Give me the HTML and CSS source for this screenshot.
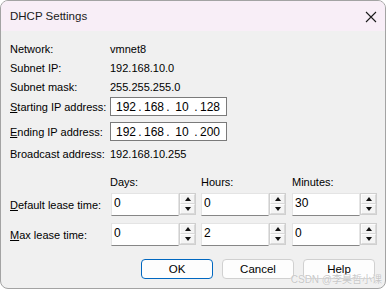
FILE: index.html
```html
<!DOCTYPE html>
<html lang="en">
<head>
    <meta charset="UTF-8">
    <title>DHCP Settings</title>
    <link rel="stylesheet" href="styles.css">
</head>
<body>
    <div class="window">
        <div class="titlebar">
            <span class="title">DHCP Settings</span>
            <svg class="close" width="12" height="12" viewBox="0 0 12 12">
                <path d="M1 1 L11 11 M11 1 L1 11" stroke="#1b1b1b" stroke-width="1.1" fill="none"/>
            </svg>
        </div>

        <div class="content">
            <div class="row">
                <span class="label">Network:</span>
                <span class="value">vmnet8</span>
            </div>
            <div class="row">
                <span class="label">Subnet IP:</span>
                <span class="value">192.168.10.0</span>
            </div>
            <div class="row">
                <span class="label">Subnet mask:</span>
                <span class="value">255.255.255.0</span>
            </div>
            <div class="row ip-row first">
                <span class="label"><u>S</u>tarting IP address:</span>
                <div class="ipbox">
                    <span class="seg">192</span><span class="dot">.</span>
                    <span class="seg">168</span><span class="dot">.</span>
                    <span class="seg">10</span><span class="dot">.</span>
                    <span class="seg">128</span>
                </div>
            </div>
            <div class="row ip-row">
                <span class="label"><u>E</u>nding IP address:</span>
                <div class="ipbox">
                    <span class="seg">192</span><span class="dot">.</span>
                    <span class="seg">168</span><span class="dot">.</span>
                    <span class="seg">10</span><span class="dot">.</span>
                    <span class="seg">200</span>
                </div>
            </div>
            <div class="row broadcast">
                <span class="label">Broadcast address:</span>
                <span class="value">192.168.10.255</span>
            </div>

            <div class="lease-head">
                <span class="label"></span>
                <span class="head">Days:</span>
                <span class="head">Hours:</span>
                <span class="head">Minutes:</span>
            </div>
            <div class="lease-row">
                <span class="label"><u>D</u>efault lease time:</span>
                <div class="spin"><input class="num" value="0"><div class="arrows"><span class="up"></span><span class="down"></span></div></div>
                <div class="spin"><input class="num" value="0"><div class="arrows"><span class="up"></span><span class="down"></span></div></div>
                <div class="spin"><input class="num" value="30"><div class="arrows"><span class="up"></span><span class="down"></span></div></div>
            </div>
            <div class="lease-row second">
                <span class="label"><u>M</u>ax lease time:</span>
                <div class="spin"><input class="num" value="0"><div class="arrows"><span class="up"></span><span class="down"></span></div></div>
                <div class="spin"><input class="num" value="2"><div class="arrows"><span class="up"></span><span class="down"></span></div></div>
                <div class="spin"><input class="num" value="0"><div class="arrows"><span class="up"></span><span class="down"></span></div></div>
            </div>

            <div class="buttons">
                <button class="default">OK</button>
                <button>Cancel</button>
                <button>Help</button>
            </div>
        </div>

        <div class="watermark">CSDN @李昊哲小课</div>
    </div>
</body>
</html>
```

FILE: styles.css
```css
body {
    margin: 0;
    background-color: white;
    font-family: "Liberation Sans", Arial, sans-serif;
    font-size: 11px;
    color: #000;
}

.window {
    position: relative;
    width: 386px;
    height: 289px;
    box-sizing: border-box;
    border: 1px solid #a3a3a3;
    border-radius: 8px;
    background-color: #f0f0f0;
    overflow: hidden;
}

.titlebar {
    height: 30px;
    background-color: #f8eef7;
    display: flex;
    align-items: center;
    justify-content: space-between;
    padding: 0 8px 0 9px;
}

.title {
    font-size: 11.5px;
    color: #1a1a1a;
}

.close {
    margin-top: 1px;
}

.content {
    padding: 8px 9px 0 9px;
}

.row {
    display: flex;
    align-items: center;
    height: 19px;
}

.label {
    width: 100px;
    flex-shrink: 0;
    white-space: nowrap;
}

.ip-row.first {
    margin-top: 1px;
}

.ip-row + .ip-row {
    margin-top: 6px;
}

.ipbox {
    display: flex;
    align-items: center;
    width: 117px;
    height: 19px;
    box-sizing: border-box;
    border: 1px solid #7a7a7a;
    background-color: white;
    padding-left: 4px;
    font-size: 12px;
}

.seg {
    width: 22px;
    text-align: center;
}

.dot {
    width: 6px;
    text-align: center;
}

.broadcast {
    margin-top: 3px;
}

/* lease time block */
.lease-head,
.lease-row {
    display: flex;
    align-items: center;
}

.lease-head {
    height: 18px;
    margin-top: 10px;
}

.lease-head .head {
    width: 91px;
    flex-shrink: 0;
}

.lease-head .head:first-of-type {
    width: 90px;
}

.lease-row {
    height: 23px;
    margin-top: 2px;
}

.lease-row.second {
    margin-top: 7px;
}

.lease-row .label {
    width: 101px;
}

.spin {
    display: flex;
    flex-shrink: 0;
    width: 85px;
    height: 23px;
    margin-right: 5px;
}

.spin + .spin + .spin {
    margin-left: 1px;
    margin-right: 0;
}

.num {
    flex: 1;
    min-width: 0;
    margin: 0;
    padding: 0 0 3px 2px;
    border: 1px solid #e4e4e4;
    border-bottom-color: #868686;
    background-color: white;
    font-family: "Liberation Sans", Arial, sans-serif;
    font-size: 12px;
    color: #000;
    outline: none;
}

.arrows {
    width: 17px;
    display: flex;
    flex-direction: column;
    border: 1px solid #cfcfcf;
    box-sizing: border-box;
    height: 22px;
}

.arrows span {
    flex: 1;
    display: flex;
    align-items: center;
    justify-content: center;
    background-color: #f4f4f4;
    border: 1px solid #fdfdfd;
    border-right-color: #d9d9d9;
    border-bottom-color: #d9d9d9;
}

.arrows .up::before,
.arrows .down::before {
    content: "";
    width: 0;
    height: 0;
    border-left: 3px solid transparent;
    border-right: 3px solid transparent;
}

.arrows .up::before {
    border-bottom: 4px solid #111;
}

.arrows .down::before {
    border-top: 4px solid #111;
}

.buttons {
    display: flex;
    justify-content: flex-end;
    gap: 9px;
    margin-top: 13px;
    padding-right: 1px;
}

button {
    width: 72px;
    height: 20px;
    padding: 0;
    border: 1px solid #d0d0d0;
    border-radius: 4px;
    background-color: #fdfdfd;
    font-family: "Liberation Sans", Arial, sans-serif;
    font-size: 11.5px;
    color: #000;
}

button.default {
    border-color: #0067c0;
}

.watermark {
    position: absolute;
    right: 3px;
    bottom: 2px;
    font-family: "Liberation Sans", "Noto Sans CJK SC", sans-serif;
    font-size: 10px;
    color: rgba(175, 175, 175, 0.7);
    text-shadow: 0 0 1px #fff;
}
```
